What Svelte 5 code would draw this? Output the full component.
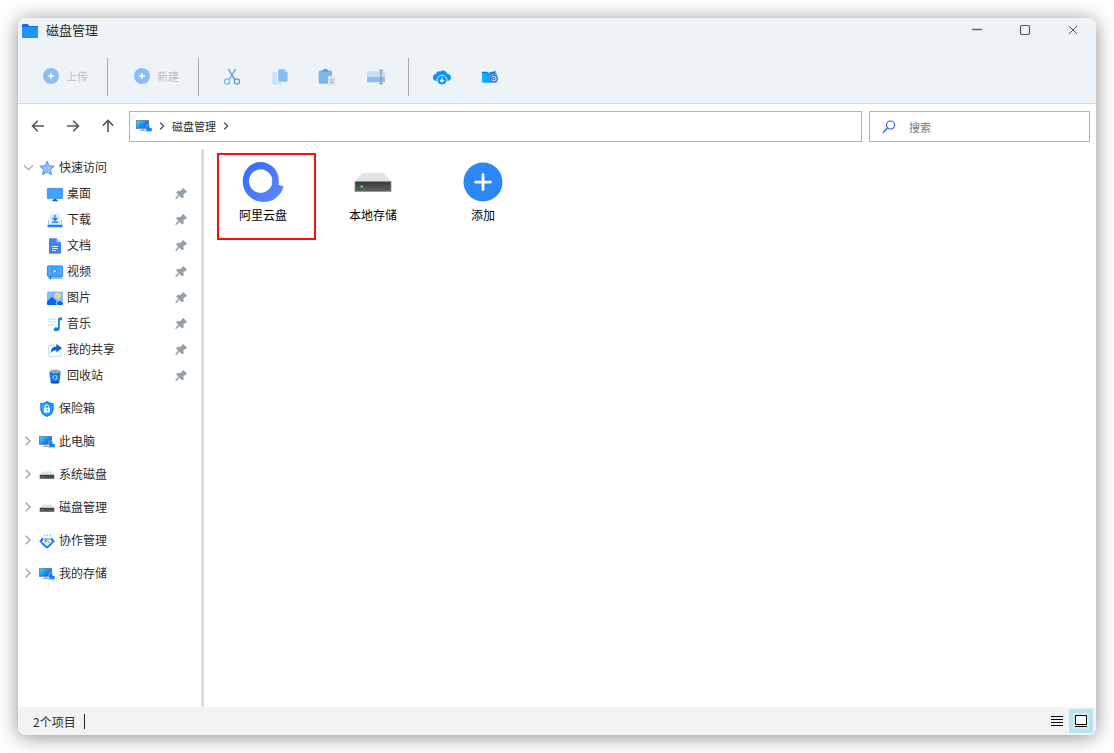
<script>
  const quick = [
    { icon: 'desktop', label: '桌面' },
    { icon: 'download', label: '下载' },
    { icon: 'doc', label: '文档' },
    { icon: 'video', label: '视频' },
    { icon: 'picture', label: '图片' },
    { icon: 'music', label: '音乐' },
    { icon: 'share', label: '我的共享' },
    { icon: 'trash', label: '回收站' }
  ];
  const roots = [
    { icon: 'safe', label: '保险箱', leaf: true },
    { icon: 'computer', label: '此电脑' },
    { icon: 'disk', label: '系统磁盘' },
    { icon: 'disk', label: '磁盘管理' },
    { icon: 'team', label: '协作管理' },
    { icon: 'computer', label: '我的存储' }
  ];
  const tools = [
    { icon: 'cut', label: '剪切' },
    { icon: 'copy', label: '复制' },
    { icon: 'paste', label: '粘贴' },
    { icon: 'rename', label: '重命名' }
  ];
  let selected = $state('阿里云盘');
  let query = $state('');
</script>

{#snippet icon(name, size = 16)}
  <svg class="icon" width={size} height={size} viewBox="0 0 16 16" fill="none" aria-hidden="true">
    {#if name === 'folder'}
      <path d="M0 2.2Q0 1 1 1H5.5L7.5 3H16V6H0Z" fill="#1668f2" />
      <path d="M0 4H15Q16 4 16 5V14Q16 15 15 15H1Q0 15 0 14Z" fill="#2094fb" />
    {:else if name === 'plus'}
      <circle cx="8" cy="8" r="8" fill="#8dbdf7" />
      <path d="M8 5V11M5 8H11" stroke="#fff" stroke-width="1.4" />
    {:else if name === 'desktop'}
      <rect x=".3" y="2.3" width="15.4" height="10.4" rx=".8" fill="#40a2fb" stroke="#2381d5" stroke-width=".6" />
      <path d="M6.5 13H9.5V14.2H11V15.2H5V14.2H6.5Z" fill="#1763ae" />
    {:else if name === 'download'}
      <path d="M3 2.5Q3 1.5 4 1.5H11L13.2 3.8V13H3Z" fill="#d6e9ff" />
      <path d="M1.5 8V13M14.5 8V13" stroke="#91c1fa" />
      <path d="M8 3V8M5.7 6L8 8.3L10.3 6M5 10.2H11" stroke="#1874da" stroke-width="1.2" />
      <path d="M.5 12.7H15.5V14.2Q15.5 15.3 14.4 15.3H1.6Q.5 15.3 .5 14.2Z" fill="#1684f4" />
    {:else if name === 'doc'}
      <path d="M2 1.2Q2 .2 3 .2H9.6L14 4.6V14.8Q14 15.8 13 15.8H3Q2 15.8 2 14.8Z" fill="#3e83f5" />
      <path d="M9.6 .2L14 4.6H9.6Z" fill="#a9cbfb" />
      <path d="M5 8.5H11M5 10.5H11M5 12.5H9" stroke="#dceaff" stroke-width="1" />
    {:else if name === 'video'}
      <rect x=".4" y="1.9" width="15.2" height="10.6" rx=".8" fill="#42a5fd" stroke="#1b79cd" stroke-width=".8" />
      <path d="M2.5 3V12M13.5 3V12" stroke="#6abaff" stroke-dasharray="1 1.4" />
      <path d="M6 4.7L10.2 7.2L6 9.7Z" fill="#d9f0ff" stroke="#1369b7" stroke-width=".6" />
      <path d="M1 14H15" stroke="#1d78c9" /><path d="M3.5 12.8V15.2" stroke="#145fae" />
    {:else if name === 'picture'}
      <rect y="1.5" width="16" height="13.5" rx="1" fill="#8bb9fe" />
      <circle cx="10.7" cy="5.7" r="2.5" fill="#ffce39" stroke="#fff4bd" stroke-width=".7" />
      <path d="M0 11.5L5 6.7L10.5 12.1L13 9.8L16 12.2V14Q16 15 15 15H1Q0 15 0 14Z" fill="#0768e5" />
      <path d="M10.5 15L8.9 13L12.9 9.9L16 12.5" stroke="#d5e6ff" stroke-width=".8" />
    {:else if name === 'music'}
      <path d="M1 3H9M1 6H9M1 9H7" stroke="#bad7fb" stroke-width="1.2" />
      <path d="M11 13V3.5Q11 1.8 12.7 1.6L15 1.3V3.9L12.8 4.4V12.5Q12.5 15.2 9 15.2Q6.5 15 6.5 13.2Q6.6 11.3 9 11.2Q10.4 11.2 11 11.8Z" fill="#1680ef" />
    {:else if name === 'share'}
      <path d="M7 3.2H3.2Q1.8 3.2 1.8 4.6V13Q1.8 14.4 3.2 14.4H12.5Q13.9 14.4 13.9 13V10" stroke="#c3defc" stroke-width="1.3" />
      <path d="M9.4 1.7L15 6.2L9.4 10.5V8.2Q5.7 8 3.7 11.3Q3.6 4.7 9.4 4.2Z" fill="#0766ce" />
    {:else if name === 'trash'}
      <path d="M2.3 3.4H13.7L12.4 14.4Q12.2 15.6 8 15.6Q3.8 15.6 3.6 14.4Z" fill="#1677e7" />
      <ellipse cx="8" cy="3" rx="6" ry="1.9" fill="#d5dfe8" /><ellipse cx="8" cy="3.3" rx="4.6" ry="1.1" fill="#82909d" />
      <path d="M4.3 13.2Q8 14.8 11.7 13.2L11.5 14.7Q8 16 4.5 14.7Z" fill="#0b4196" /><circle cx="8" cy="9.3" r="2" stroke="#9fd5ff" stroke-width="1.1" stroke-dasharray="3.3 1" />
    {:else if name === 'safe'}
      <path d="M8 0Q11 2.2 14.7 2.2V8Q14.7 13.2 8 16Q1.3 13.2 1.3 8V2.2Q5 2.2 8 0Z" fill="#087df0" />
      <path d="M8 1.6Q10.5 3.3 13.4 3.4V8Q13.4 12.2 8 14.5Q2.6 12.2 2.6 8V3.4Q5.5 3.3 8 1.6Z" fill="#35b1ff" />
      <path d="M8 1.6Q10.5 3.3 13.4 3.4V8Q13.4 12.2 8 14.5Z" fill="#1595fc" />
      <rect x="5" y="6.8" width="6" height="4.8" rx=".7" fill="#fff" /><path d="M6.2 7V5.5Q6.2 4 8 4Q9.8 4 9.8 5.5V7" stroke="#fff" /><path d="M8 8.2V10" stroke="#087df0" />
    {:else if name === 'computer'}
      <defs><linearGradient id="screen" x1="0" y1="0" x2="1" y2=".7"><stop stop-color="#3fe0fc" /><stop offset=".6" stop-color="#1c88ee" /><stop offset="1" stop-color="#1266da" /></linearGradient></defs>
      <rect x=".3" y="2.3" width="12.4" height="8.2" fill="url(#screen)" stroke="#54728a" stroke-width=".6" />
      <path d="M5.2 10.8H8.5V12H9.7V13H3.7V12H5.2Z" fill="#a5b5c4" />
      <rect x="9.9" y="7" width="3.6" height="6" rx=".4" fill="#167de8" stroke="#a7dafe" stroke-width=".5" />
      <rect x="12.5" y="10" width="3.3" height="3" rx=".4" fill="#1186f1" /><path d="M9 13.4H16" stroke="#7db8ea" stroke-width=".6" />
    {:else if name === 'disk'}
      <defs>
        <linearGradient id="disk-body" x1="0" y1="0" x2="0" y2="1"><stop stop-color="#393939" /><stop offset="1" stop-color="#626262" /></linearGradient>
      </defs>
      <path d="M3.7 4.4H12.3L15.3 7.8H.7Z" fill="#e0e2e6" />
      <path d="M.6 7.6H15.4V12H.6Z" fill="#aaa" /><path d="M.9 7.9H15.1V11.7H.9Z" fill="url(#disk-body)" />
      <circle cx="3.5" cy="9.8" r=".55" fill="#31ef51" />
    {:else if name === 'team'}
      <path d="M8 .8V3.2M4.8 1.4L5.8 3.3M11.2 1.4L10.2 3.3" stroke="#75bbff" />
      <path d="M.2 8.6L3.2 4.6L4.6 5.7L2.4 10.2ZM15.8 8.6L12.8 4.6L11.4 5.7L13.6 10.2Z" fill="#0879f0" />
      <path d="M2.8 9.8L7 13.9Q8 14.7 9 13.9L13.2 9.8" stroke="#0878ed" stroke-width="1.8" />
      <path d="M4.8 6.4L7.8 5.8L11.4 6.4M7.8 6L5.6 8.6Q7.1 9.5 8.6 7.9L12 10.7" stroke="#2b8bf2" stroke-width="1" />
      <path d="M4.7 9.8L8 12.4M7.6 10L9.6 11.8" stroke="#86bdf9" stroke-width=".8" />
    {:else if name === 'star'}
      <path d="M8 1.2L10.1 5.7L15.2 6.2L11.4 9.6L12.6 14.7L8 12.1L3.4 14.7L4.6 9.6L.8 6.2L5.9 5.7Z" fill="#9ac2ff" stroke="#368cfb" stroke-width=".9" />
      <path d="M8 3.2V10.8M1.8 6.8L6 7.4M4.2 13.5L7 10.2" stroke="#6da9ff" stroke-width=".6" />
    {:else if name === 'pin'}
      <path d="M10.2 2.5L13.5 5.8L12.8 6.6L12 6.5L9.8 8.8L10.3 11L9.3 12L6.4 9.3L3.2 12.7L2.7 12.2L5.8 8.7L3.6 6.1L4.6 5.3L6.9 5.7L9.3 3.8L9.4 3.1Z" fill="#94a0a9" stroke="#94a0a9" />
    {:else if name === 'right'}
      <path d="M6 4.2L9.8 8L6 11.8" stroke="currentColor" stroke-width="1.2" />
    {:else if name === 'down'}
      <path d="M2.5 5.3L8 10.7L13.5 5.3" stroke="currentColor" stroke-width="1.4" />
    {:else if name === 'back'}
      <path d="M14 8H2.7M7.8 2.8L2.5 8L7.8 13.2" stroke="currentColor" stroke-width="1.6" />
    {:else if name === 'forward'}
      <path d="M2 8H13.3M8.2 2.8L13.5 8L8.2 13.2" stroke="currentColor" stroke-width="1.6" />
    {:else if name === 'up'}
      <path d="M8 14V2.7M2.8 7.8L8 2.5L13.2 7.8" stroke="currentColor" stroke-width="1.6" />
    {:else if name === 'cut'}
      <path d="M4.4 0L10.5 10.5" stroke="#62afea" stroke-width="1.5" /><path d="M11.6 0L5.3 10.5" stroke="#6d9cc4" stroke-width="1.3" />
      <circle cx="3.1" cy="12.5" r="2.6" stroke="#70bbf3" stroke-width="1.3" /><circle cx="12.9" cy="12.5" r="2.6" stroke="#6b99c5" stroke-width="1.3" />
    {:else if name === 'copy'}
      <path d="M5 3H1.5Q0 3 0 4.5V14Q0 15.5 1.5 15.5H8.5Q10 15.5 10 14V13H5Z" fill="#cfe1f8" />
      <path d="M7.5 .2H12.8L15.6 3V11.2Q15.6 12.7 14.1 12.7H7.7Q6.2 12.7 6.2 11.2V1.7Q6.2 .2 7.5 .2Z" fill="#87baf6" /><path d="M12.6 .2V3.2H15.6Z" fill="#bddafa" />
    {:else if name === 'paste'}
      <path d="M0 1.5H3Q3.5 0 5.5 0Q7.5 0 8 1.5H10.5Q12 1.5 12 3V14.7H0Q-1.4 14.7 -1.4 13.2V3Q-1.4 1.5 0 1.5Z" fill="#79b9e7" />
      <path d="M2.5 1.5Q3 -.3 5.4 -.3Q7.8 -.3 8.2 1.5V3H2.5Z" fill="#65a3cc" />
      <path d="M8 7H12.3L15.6 9.5V16.5H8Z" fill="#dde5ea" /><path d="M9.8 11H13.8M9.8 13.3H13.8" stroke="#9caeb9" />
    {:else if name === 'rename'}
      <rect x="-1" y="2.8" width="18" height="10.5" rx=".7" fill="#8fbdf3" /><path d="M-1 3.5Q-1 2.8 -.3 2.8H17V8H-1Z" fill="#c9dcf3" />
      <path d="M11 1.2H15M13 1.5V14.5M11 14.7H15" stroke="#8191a5" stroke-width="1.1" />
    {:else if name === 'cloud'}
      <path d="M3.2 12Q-1 11.8 -1 8.5Q-1 5.5 2 5.1Q2.8 1.7 6.3 2.5Q10 .2 12.5 3.5L13.4 5Q17 5.1 17 8.4Q17 11.6 13 12Z" fill="#0795f5" />
      <circle cx="8" cy="11.1" r="4.9" fill="#0795f5" stroke="#eef3f8" stroke-width=".9" /><path d="M8 8.3V12.8M6 11L8 13L10 11" stroke="#fff" stroke-width="1.2" />
    {:else if name === 'sync'}
      <defs><linearGradient id="sync-body"><stop stop-color="#05bdfb" /><stop offset="1" stop-color="#0581ec" /></linearGradient></defs>
      <path d="M.5 2.8H5L6.5 3.7L13.5 2V6H0V3.3Z" fill="#0878df" /><rect y="4" width="14.7" height="9.7" rx="1" fill="url(#sync-body)" />
      <circle cx="11.8" cy="9.5" r="4.3" fill="#3467f5" stroke="#9cc5ff" stroke-width=".5" /><circle cx="11.8" cy="9.5" r="2.3" stroke="#fff" stroke-width=".9" stroke-dasharray="5.8 1.4" /><circle cx="11.8" cy="9.5" r=".7" fill="#fff" />
    {:else if name === 'search'}
      <circle cx="9.7" cy="5.7" r="4.6" stroke="#2e5bf0" stroke-width="1.3" /><path d="M6.3 9.1L1 14.5" stroke="#2e5bf0" stroke-width="1.5" />
    {:else if name === 'aliyun'}
      <defs><linearGradient id="ring" x1="0" y1="0" x2="1" y2="1"><stop stop-color="#3269fa" /><stop offset="1" stop-color="#6488ff" /></linearGradient></defs>
      <path fill-rule="evenodd" d="M14.2 9.1Q14.4 8.2 14.3 7.3A7.3 7.3 0 0 0 7 0A7.2 7.6 0 0 0 -.1 7.8A8.2 8.2 0 0 0 8.2 16A8.2 8.2 0 0 0 16.2 9.8ZM11.4 8.3L11.7 8.4A4.7 4.7 0 1 1 11.7 6.9Q11.7 7.6 11.4 8.3Z" fill="url(#ring)" />
    {:else if name === 'add'}
      <circle cx="8" cy="8" r="7.8" fill="#2b87f3" /><path d="M8 5V11M5 8H11" stroke="#fff" stroke-width="1.1" stroke-linecap="round" />
    {/if}
  </svg>
{/snippet}

<div class="window">
  <header>
    <div class="titlebar">
      <h1>{@render icon('folder')}<span>磁盘管理</span></h1>
      <div class="controls">
        <button aria-label="最小化"><svg width="12" height="12" fill="none" stroke="#666"><path d="M1 5.5H11" stroke-width="1.4" /></svg></button>
        <button aria-label="最大化"><svg width="12" height="12" fill="none" stroke="#555"><rect x="1.5" y="1.5" width="9" height="9" rx="1.5" stroke-width="1.2" /></svg></button>
        <button aria-label="关闭"><svg width="12" height="12" fill="none" stroke="#555"><path d="M2 2L10 10M10 2L2 10" /></svg></button>
      </div>
    </div>
    <div class="toolbar">
      <div class="group labelled"><button disabled>{@render icon('plus')}上传</button></div>
      <div class="group labelled"><button disabled>{@render icon('plus')}新建</button></div>
      <div class="group">
        {#each tools as t}<button class="tool" aria-label={t.label} disabled>{@render icon(t.icon)}</button>{/each}
      </div>
      <div class="group">
        <button class="tool" aria-label="云下载">{@render icon('cloud')}</button>
        <button class="tool" aria-label="同步">{@render icon('sync')}</button>
      </div>
    </div>
  </header>

  <div class="navrow">
    <nav class="history">
      <button aria-label="后退">{@render icon('back')}</button>
      <button aria-label="前进">{@render icon('forward')}</button>
      <button aria-label="上一级">{@render icon('up')}</button>
    </nav>
    <div class="address">
      {@render icon('computer')}
      <span class="sep">{@render icon('right', 14)}</span>
      <a href="#disk">磁盘管理</a>
      <span class="sep">{@render icon('right', 14)}</span>
    </div>
    <label class="search">
      {@render icon('search', 14)}
      <input type="text" aria-label="搜索" placeholder="搜索" bind:value={query} />
    </label>
  </div>

  <div class="body">
    <aside>
      <ul class="tree">
        <li>
          <a class="row" href="#quick"><span class="arrow">{@render icon('down', 13)}</span>{@render icon('star')}<span class="name">快速访问</span></a>
          <ul>
            {#each quick as q}
              <li><a class="row child" href="#{q.icon}">{@render icon(q.icon)}<span class="name">{q.label}</span><span class="pin">{@render icon('pin')}</span></a></li>
            {/each}
          </ul>
        </li>
        {#each roots as r}
          <li>
            <a class="row" href="#{r.label}"><span class="arrow">{#if !r.leaf}{@render icon('right', 18)}{/if}</span>{@render icon(r.icon)}<span class="name">{r.label}</span></a>
          </li>
        {/each}
      </ul>
    </aside>
    <main>
      {#each [['aliyun', '阿里云盘'], ['disk', '本地存储'], ['add', '添加']] as [name, label]}
        <button class="tile" class:selected={selected === label} onclick={() => (selected = label)}>
          {@render icon(name, 40)}
          <span>{label}</span>
        </button>
      {/each}
    </main>
  </div>

  <footer>
    <span class="count">2个项目</span>
    <div class="views">
      <button aria-label="列表"><svg width="12" height="12" stroke="#000"><path d="M0 1.5H12M0 4.5H12M0 7.5H12M0 10.5H12" /></svg></button>
      <button class="active" aria-label="大图标"><svg width="12" height="12" fill="#fff" stroke="#000"><path d="M.5 .5H11.5V9.5H.5ZM0 11.5H12" /></svg></button>
    </div>
  </footer>
</div>

<style>
  :global(body) {
    margin: 0;
    background: #fff;
  }
  .window {
    box-sizing: border-box;
    display: flex;
    flex-direction: column;
    min-height: calc(100vh - 36px);
    margin: 18px;
    border-radius: 8px;
    overflow: hidden;
    background: #fff;
    color: #2c2c2c;
    font: 12px/18px "Noto Sans CJK SC", sans-serif;
    box-shadow: 0 2px 20px rgba(0, 0, 0, 0.45);
  }
  .icon {
    display: block;
    flex: none;
    overflow: visible;
  }
  button {
    display: flex;
    align-items: center;
    justify-content: center;
    padding: 0;
    border: 0;
    background: none;
    color: inherit;
    font: inherit;
  }
  a {
    color: inherit;
    text-decoration: none;
  }
  header {
    background: #eef3f8;
    border-bottom: 1px solid #d8dbde;
  }
  .titlebar {
    display: flex;
    justify-content: space-between;
    height: 25px;
  }
  h1 {
    display: flex;
    align-items: center;
    gap: 8px;
    margin: 0;
    padding-left: 4px;
    font-size: 13px;
    font-weight: 400;
  }
  h1 span,
  .name {
    padding-bottom: 2px;
  }
  .controls {
    display: flex;
  }
  .controls button {
    width: 48px;
    padding: 0 0 2px 2px;
  }
  .toolbar {
    display: flex;
    margin-left: -1px;
    padding: 15px 0 7px;
  }
  .group {
    display: flex;
    height: 38px;
    padding: 0 8px 0 9px;
    border-right: 1px solid #a8abae;
  }
  .group:last-child {
    border-right: 0;
  }
  .labelled {
    padding: 0 19px 0 26px;
  }
  .labelled button {
    gap: 7px;
    padding-bottom: 2px;
    color: #bdc1c5;
    font-size: 11px;
  }
  .tool {
    width: 48px;
  }
  .navrow {
    display: flex;
    gap: 7px;
    padding: 7px 6px 7px 2px;
  }
  .history {
    display: flex;
    margin-right: -3px;
    padding-bottom: 2px;
    color: #555;
  }
  .history button {
    width: 35px;
  }
  .address,
  .search {
    box-sizing: border-box;
    display: flex;
    align-items: center;
    height: 31px;
    border: 1px solid #b4b4b4;
    font-size: 11px;
  }
  .address {
    flex: 1;
    padding: 0 6px 2px;
  }
  .sep {
    margin: 0 3px;
    color: #222;
  }
  .search {
    width: 221px;
    gap: 13px;
    padding-left: 12px;
  }
  .search input {
    flex: 1;
    min-width: 0;
    padding: 0;
    border: 0;
    outline: 0;
    background: none;
    font: inherit;
  }
  .search input::placeholder {
    color: #777;
  }
  .body {
    flex: 1;
    display: flex;
  }
  aside {
    flex: none;
    width: 183px;
    border-right: 3px solid #dcdcdc;
  }
  ul {
    margin: 0;
    padding: 0;
    list-style: none;
  }
  .tree > li {
    padding-top: 7px;
  }
  .tree > li:first-child {
    padding-top: 6px;
  }
  .row {
    display: flex;
    align-items: center;
    gap: 4px;
    height: 26px;
    padding-left: 3px;
    font-size: 12px;
  }
  .child {
    padding: 0 12px 0 29px;
  }
  .arrow {
    display: flex;
    justify-content: center;
    width: 14px;
    padding-bottom: 2px;
    color: #a0a0a0;
  }
  .pin {
    margin-left: auto;
    padding-bottom: 1px;
  }
  main {
    flex: 1;
    display: flex;
    flex-wrap: wrap;
    align-items: flex-start;
    align-content: flex-start;
    padding: 4px;
  }
  .tile {
    position: relative;
    flex-direction: column;
    gap: 4px;
    width: 110px;
    height: 87px;
    padding-bottom: 8px;
    color: #000;
  }
  .tile.selected::after {
    content: "";
    position: absolute;
    inset: 0 2px 0 9px;
    border: 2px solid #fb0d0d;
  }
  footer {
    display: flex;
    align-items: center;
    justify-content: space-between;
    height: 28px;
    padding: 0 3px 0 15px;
    background: #f3f3f3;
  }
  .count {
    padding-right: 8px;
    border-right: 1px solid #222;
    line-height: 15px;
  }
  .views {
    display: flex;
  }
  .views button {
    width: 24px;
    height: 24px;
  }
  .views .active {
    background: #b5e5f5;
  }
  .active svg {
    padding: 2px;
    background: #dfebf0;
    border-radius: 2px;
  }
</style>
